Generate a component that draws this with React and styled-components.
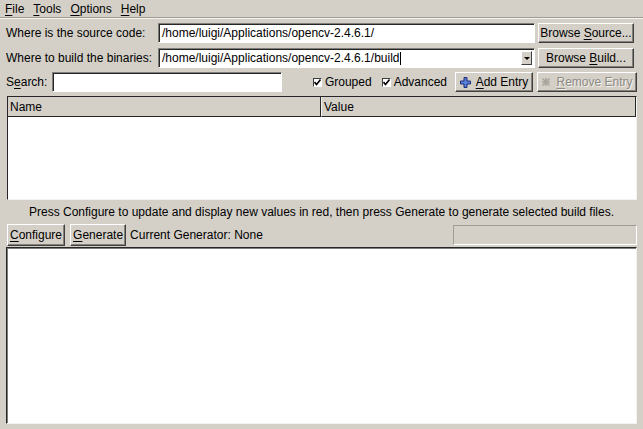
import styled, { createGlobalStyle } from "styled-components";

const GlobalStyle = createGlobalStyle`
  html, body {
    margin: 0;
    padding: 0;
    background: #d4d0c8;
  }
  body {
    font-family: "Liberation Sans", Arial, sans-serif;
    font-size: 12px;
    color: #000;
  }
  * {
    box-sizing: border-box;
  }
`;

const Window = styled.div`
  width: 643px;
  height: 429px;
  background: #d4d0c8;
  display: flex;
  flex-direction: column;
  overflow: hidden;
`;

const MenuBar = styled.div`
  height: 18px;
  display: flex;
  align-items: center;
  gap: 9px;
  padding: 0 5px;
  border-bottom: 1px solid #a09d97;
  box-shadow: 0 1px 0 #f4f2ee;
`;

const MenuItem = styled.span`
  line-height: 16px;
  & u {
    text-underline-offset: 2px;
  }
`;

const Content = styled.div`
  flex: 1;
  min-height: 0;
  display: flex;
  flex-direction: column;
  padding: 5px 6px 5px 6px;
`;

const PathGrid = styled.div`
  display: grid;
  grid-template-columns: 152px 377px 99px;
  row-gap: 5px;
  align-items: center;
  & > button {
    margin-left: 3px;
  }
`;

const Label = styled.label`
  white-space: nowrap;
  & u {
    text-underline-offset: 2px;
  }
`;

const Field = styled.div`
  position: relative;
  height: 20px;
  width: ${(p) => (p.$w ? `${p.$w}px` : "auto")};
  margin-left: ${(p) => p.$ml || 0}px;
  background: #fff;
  border: 1px solid;
  border-color: #7f7d78 #ffffff #ffffff #7f7d78;
  box-shadow: inset 1px 1px 0 #262626;
  display: flex;
  align-items: center;
  padding: 0 2px 0 3px;
  white-space: nowrap;
  overflow: hidden;
`;

const Caret = styled.span`
  display: inline-block;
  width: 1px;
  height: 13px;
  background: #000;
  margin-left: 1px;
`;

const ComboArrow = styled.span`
  position: absolute;
  right: 2px;
  top: 2px;
  width: 11px;
  height: 14px;
  background: #d4d0c8;
  border: 1px solid;
  border-color: #ffffff #404040 #404040 #ffffff;
  display: flex;
  align-items: center;
  justify-content: center;
  &::after {
    content: "";
    border-left: 3px solid transparent;
    border-right: 3px solid transparent;
    border-top: 3px solid #000;
  }
`;

const Button = styled.button`
  font-family: "Liberation Sans", Arial, sans-serif;
  font-size: 12px;
  height: ${(p) => p.$h || 20}px;
  width: ${(p) => (p.$w ? `${p.$w}px` : "auto")};
  padding: 0 2px;
  background: #d4d0c8;
  color: ${(p) => (p.disabled ? "#8e8b85" : "#000")};
  text-shadow: ${(p) => (p.disabled ? "1px 1px 0 #f4f2ee" : "none")};
  border: 1px solid;
  border-color: #ffffff #404040 #404040 #ffffff;
  box-shadow: inset -1px -1px 0 #84817b;
  display: flex;
  align-items: center;
  justify-content: center;
  gap: 5px;
  white-space: nowrap;
  & u {
    text-underline-offset: 2px;
  }
`;

const SearchRow = styled.div`
  display: flex;
  align-items: center;
  margin-top: 4px;
  height: 20px;
`;

const CheckGroup = styled.div`
  display: flex;
  align-items: center;
  gap: 10px;
  margin-left: auto;
  margin-right: 8px;
`;

const Check = styled.span`
  display: flex;
  align-items: center;
  gap: 3px;
`;

const Box = styled.span`
  width: 9px;
  height: 9px;
  background: #fff;
  border: 1px solid;
  border-color: #404040 #ffffff #ffffff #404040;
  display: flex;
  align-items: center;
  justify-content: center;
`;

const EntryButtons = styled.div`
  display: flex;
  gap: 4px;
`;

const Table = styled.div`
  margin-top: 4px;
  height: 104px;
  margin-left: 1px;
  background: #fff;
  border: 1px solid;
  border-color: #262626 #f4f2ee #f4f2ee #262626;
  display: flex;
  flex-direction: column;
`;

const HeaderRow = styled.div`
  display: grid;
  grid-template-columns: 313px 1fr;
  height: 20px;
  background: #d4d0c8;
`;

const HeaderCell = styled.div`
  display: flex;
  align-items: center;
  padding-left: 2px;
  border-right: 1px solid #262626;
  border-bottom: 1px solid #262626;
  border-left: ${(p) => (p.$first ? "none" : "1px solid #f4f2ee")};
`;

const Status = styled.div`
  text-align: center;
  height: 24px;
  line-height: 25px;
  white-space: nowrap;
`;

const ActionRow = styled.div`
  display: flex;
  align-items: center;
  gap: 5px;
  margin-left: 1px;
  height: 22px;
`;

const GenLabel = styled.span`
  margin-left: -1px;
`;

const Progress = styled.div`
  margin-left: auto;
  width: 184px;
  height: 20px;
  border: 1px solid;
  border-color: #a09d97 #ffffff #ffffff #a09d97;
  background: #d4d0c8;
`;

const Output = styled.div`
  flex: 1;
  min-height: 0;
  margin-top: 1px;
  background: #fff;
  border: 1px solid;
  border-color: #262626 #f4f2ee #f4f2ee #262626;
  box-shadow: inset 1px 1px 0 #7f7d78;
`;

const CheckMark = () => (
  <svg width="7" height="7" viewBox="0 0 7 7">
    <path d="M0.5 3 L2.5 5.5 L6.5 0.5" stroke="#000" strokeWidth="1.6" fill="none" />
  </svg>
);

const PlusIcon = () => (
  <svg width="11" height="11" viewBox="0 0 11 11">
    <path
      d="M4 0.5 H7 V4 H10.5 V7 H7 V10.5 H4 V7 H0.5 V4 H4 Z"
      fill="#5a7fd6"
      stroke="#1c2f7a"
      strokeWidth="1"
    />
  </svg>
);

const RemoveIcon = () => (
  <svg width="10" height="10" viewBox="0 0 10 10">
    <path d="M1.5 1.5 L8.5 8.5 M8.5 1.5 L1.5 8.5 M5 1 V9 M1 5 H9" stroke="#a9a69f" strokeWidth="1.6" />
  </svg>
);

const App = () => {
  return (
    <Window>
      <GlobalStyle />
      <MenuBar>
        <MenuItem><u>F</u>ile</MenuItem>
        <MenuItem><u>T</u>ools</MenuItem>
        <MenuItem><u>O</u>ptions</MenuItem>
        <MenuItem><u>H</u>elp</MenuItem>
      </MenuBar>
      <Content>
        <PathGrid>
          <Label>Where is the source code:</Label>
          <Field>/home/luigi/Applications/opencv-2.4.6.1/</Field>
          <Button>
            <span>Browse <u>S</u>ource...</span>
          </Button>
          <Label>Where to build the binaries:</Label>
          <Field>
            /home/luigi/Applications/opencv-2.4.6.1/build
            <Caret />
            <ComboArrow />
          </Field>
          <Button>
            <span>Browse <u>B</u>uild...</span>
          </Button>
        </PathGrid>
        <SearchRow>
          <Label>S<u>e</u>arch:</Label>
          <Field $w={230} $ml={5} />
          <CheckGroup>
            <Check>
              <Box><CheckMark /></Box>
              Grouped
            </Check>
            <Check>
              <Box><CheckMark /></Box>
              Advanced
            </Check>
          </CheckGroup>
          <EntryButtons>
            <Button $w={78}>
              <PlusIcon />
              <span><u>A</u>dd Entry</span>
            </Button>
            <Button $w={100} disabled>
              <RemoveIcon />
              <span><u>R</u>emove Entry</span>
            </Button>
          </EntryButtons>
        </SearchRow>
        <Table>
          <HeaderRow>
            <HeaderCell $first>Name</HeaderCell>
            <HeaderCell>Value</HeaderCell>
          </HeaderRow>
        </Table>
        <Status>
          Press Configure to update and display new values in red, then press Generate to generate selected build files.
        </Status>
        <ActionRow>
          <Button $h={22}><span><u>C</u>onfigure</span></Button>
          <Button $h={22}><span><u>G</u>enerate</span></Button>
          <GenLabel>Current Generator: None</GenLabel>
          <Progress />
        </ActionRow>
        <Output />
      </Content>
    </Window>
  );
};

export default App;
